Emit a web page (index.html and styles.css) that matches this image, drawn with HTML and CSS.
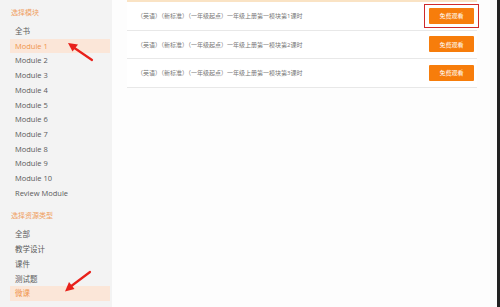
FILE: index.html
```html
<!doctype html>
<html>
  <head>
    <meta charset="utf-8">
    <title>选择模块</title>
    <link rel="stylesheet" href="styles.css">
  </head>
  <body>
    <div class="page">
      <aside class="sidebar">
        <h3 class="group-title">选择模块</h3>
        <ul class="menu">
          <li>全书</li>
          <li class="active">Module 1</li>
          <li>Module 2</li>
          <li>Module 3</li>
          <li>Module 4</li>
          <li>Module 5</li>
          <li>Module 6</li>
          <li>Module 7</li>
          <li>Module 8</li>
          <li>Module 9</li>
          <li>Module 10</li>
          <li>Review Module</li>
        </ul>
        <h3 class="group-title second">选择资源类型</h3>
        <ul class="menu">
          <li>全部</li>
          <li>教学设计</li>
          <li>课件</li>
          <li>测试题</li>
          <li class="active">微课</li>
        </ul>
      </aside>

      <main class="content">
        <div class="list">
          <div class="row">
            <span class="title">（英语）（新标准）（一年级起点）一年级上册第一模块第1课时</span>
            <span class="btn-wrap marked"><button class="btn">免费观看</button></span>
          </div>
          <div class="row">
            <span class="title">（英语）（新标准）（一年级起点）一年级上册第一模块第2课时</span>
            <span class="btn-wrap"><button class="btn">免费观看</button></span>
          </div>
          <div class="row">
            <span class="title">（英语）（新标准）（一年级起点）一年级上册第一模块第3课时</span>
            <span class="btn-wrap"><button class="btn">免费观看</button></span>
          </div>
        </div>
      </main>
    </div>

    <svg class="arrow arrow-top" width="30" height="22" viewBox="0 0 30 22">
      <path d="M26 19 L7 6" stroke="#e8201a" stroke-width="2.2" stroke-linecap="round"/>
      <path d="M2 2 L12 3.5 L6.5 10.5 Z" fill="#e8201a"/>
    </svg>
    <svg class="arrow arrow-bottom" width="30" height="24" viewBox="0 0 30 24">
      <path d="M27 2 L7 17" stroke="#e8201a" stroke-width="2.2" stroke-linecap="round"/>
      <path d="M2 21.5 L6 12 L11.5 19 Z" fill="#e8201a"/>
    </svg>
  </body>
</html>
```

FILE: styles.css
```css
* {
  box-sizing: border-box;
}

html,
body {
  margin: 0;
  padding: 0;
  width: 100%;
  height: 100%;
  overflow: hidden;
  background: #fbfbfb;
}
body {
  font-family: "Open Sans", "Noto Sans CJK SC", sans-serif;
  color: #555;
  position: relative;
}
.page {
  display: flex;
  height: 100%;
  border-right: 3px solid #222;
}
.sidebar {
  width: 112px;
  flex: none;
  background: #f3f3f3;
  padding: 7px 2px 0 10px;
}
.group-title {
  margin: 0 0 5px 1px;
  font-size: 7px;
  font-weight: normal;
  color: #f0a060;
  line-height: 12px;
}
.group-title.second {
  margin-top: 10px;
}
.menu {
  list-style: none;
  margin: 0;
  padding: 0;
}
.menu li {
  font-size: 7.5px;
  line-height: 14.7px;
  padding-left: 5px;
  color: #5a5a5a;
}
.menu li.active {
  background: #fbe6d8;
  color: #f0944a;
}
.content {
  flex: 1;
  padding: 0 20px 0 15px;
  background: #fdfdfd;
}
.list {
  background: #fff;
  border-top: 2px solid #fae3c4;
  width: 350px;
}
.row {
  display: flex;
  align-items: center;
  justify-content: space-between;
  height: 28.5px;
  padding: 0 3px 0 10px;
  border-bottom: 1px solid #e8e8e8;
}
.title {
  font-size: 6px;
  color: #777;
}
.btn-wrap {
  display: flex;
  padding: 3px 4px;
  border: 1.5px solid transparent;
  margin-right: -5px;
}
.btn-wrap.marked {
  border-color: #d02a2a;
}
.btn {
  width: 45px;
  height: 16px;
  border: none;
  border-radius: 1px;
  background: #f77d0b;
  color: #fff;
  font-family: inherit;
  font-size: 6px;
  padding: 0;
}
.arrow {
  position: absolute;
}
.arrow-top {
  left: 66px;
  top: 41px;
}
.arrow-bottom {
  left: 63px;
  top: 270px;
}
```
